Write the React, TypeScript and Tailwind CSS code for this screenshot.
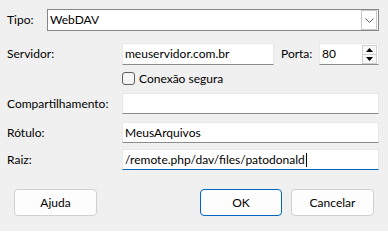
import { useState } from 'react'

const font = { fontFamily: 'Lato, "Noto Sans", "Liberation Sans", sans-serif' }

function TextField({ value, focused = false, className = '' }: { value: string; focused?: boolean; className?: string }) {
  return (
    <div
      className={`flex items-center bg-white border border-[#e8e8e8] pl-[2px] text-[12px] leading-none text-black ${
        focused ? 'border-b-[#0067c0]' : 'border-b-[#8c8c8c]'
      } ${className}`}
    >
      <span>{value}</span>
      {focused && <span className="ml-[1px] h-[14px] w-px bg-black" />}
    </div>
  )
}

export default function App() {
  const [secure, setSecure] = useState(false)

  return (
    <div
      className="w-[388px] h-[231px] bg-[#f0f0f0] pl-[7px] pr-[9px] flex flex-col text-[12px] text-black overflow-hidden"
      style={font}
    >
      {/* Tipo */}
      <div className="mt-[9px] h-[22px] flex items-center">
        <span className="w-[40px]">Tipo:</span>
        <div className="flex-1 h-full flex items-center bg-white border border-[#868686] pl-[2px]">
          <span className="flex-1">WebDAV</span>
          <div className="w-[16px] h-[20px] mr-px border border-[#c8c8c8] flex items-center justify-center">
            <svg width="9" height="5" viewBox="0 0 9 5" fill="none">
              <path d="M0.5 0.5 L4.5 4.5 L8.5 0.5" stroke="#606060" strokeWidth="1" />
            </svg>
          </div>
        </div>
      </div>

      {/* Servidor / Porta */}
      <div className="mt-[12px] h-[22px] flex items-center">
        <span className="w-[115px]">Servidor:</span>
        <TextField value="meuservidor.com.br" className="w-[152px] h-full" />
        <span className="ml-[7px] w-[38px]">Porta:</span>
        <div className="flex-1 h-full flex items-center bg-white border border-[#e8e8e8] border-b-[#8c8c8c] pl-[2px]">
          <span className="flex-1">80</span>
          <div className="w-[15px] h-[19px] mr-[1px] flex flex-col border border-[#d0d0d0] bg-[#f7f7f7]">
            <div className="flex-1 flex items-center justify-center border-b border-[#d0d0d0]">
              <svg width="7" height="4" viewBox="0 0 7 4">
                <path d="M0 4 L3.5 0 L7 4 Z" fill="#000" />
              </svg>
            </div>
            <div className="flex-1 flex items-center justify-center">
              <svg width="7" height="4" viewBox="0 0 7 4">
                <path d="M0 0 L3.5 4 L7 0 Z" fill="#000" />
              </svg>
            </div>
          </div>
        </div>
      </div>

      {/* Conexão segura */}
      <label className="mt-[7px] h-[13px] ml-[115px] flex items-center gap-[4px] cursor-default">
        <span
          onClick={() => setSecure(!secure)}
          className="w-[13px] h-[13px] rounded-[3px] border border-[#5f5f5f] bg-[#f5f5f5] flex items-center justify-center"
        >
          {secure && (
            <svg width="9" height="7" viewBox="0 0 9 7" fill="none">
              <path d="M1 3.5 L3.5 6 L8 1" stroke="#000" strokeWidth="1.2" />
            </svg>
          )}
        </span>
        <span>Conexão segura</span>
      </label>

      {/* Compartilhamento */}
      <div className="mt-[8px] h-[21px] flex items-center">
        <span className="w-[115px]">Compartilhamento:</span>
        <TextField value="" className="flex-1 h-full" />
      </div>

      {/* Rótulo */}
      <div className="mt-[8px] h-[21px] flex items-center">
        <span className="w-[115px]">Rótulo:</span>
        <TextField value="MeusArquivos" className="flex-1 h-full" />
      </div>

      {/* Raiz */}
      <div className="mt-[6px] h-[21px] flex items-center">
        <span className="w-[115px]">Raiz:</span>
        <TextField value="/remote.php/dav/files/patodonald" focused className="flex-1 h-full" />
      </div>

      {/* Buttons */}
      <div className="mt-[19px] h-[27px] flex">
        <button className="ml-[7px] w-[83px] h-full rounded-[4px] bg-[#fdfdfd] border border-[#d0d0d0]">
          Ajuda
        </button>
        <button className="ml-auto w-[82px] h-full rounded-[4px] bg-[#fdfdfd] border border-[#0067c0]">
          OK
        </button>
        <button className="ml-[9px] mr-[5px] w-[83px] h-full rounded-[4px] bg-[#fdfdfd] border border-[#d0d0d0]">
          Cancelar
        </button>
      </div>
    </div>
  )
}
